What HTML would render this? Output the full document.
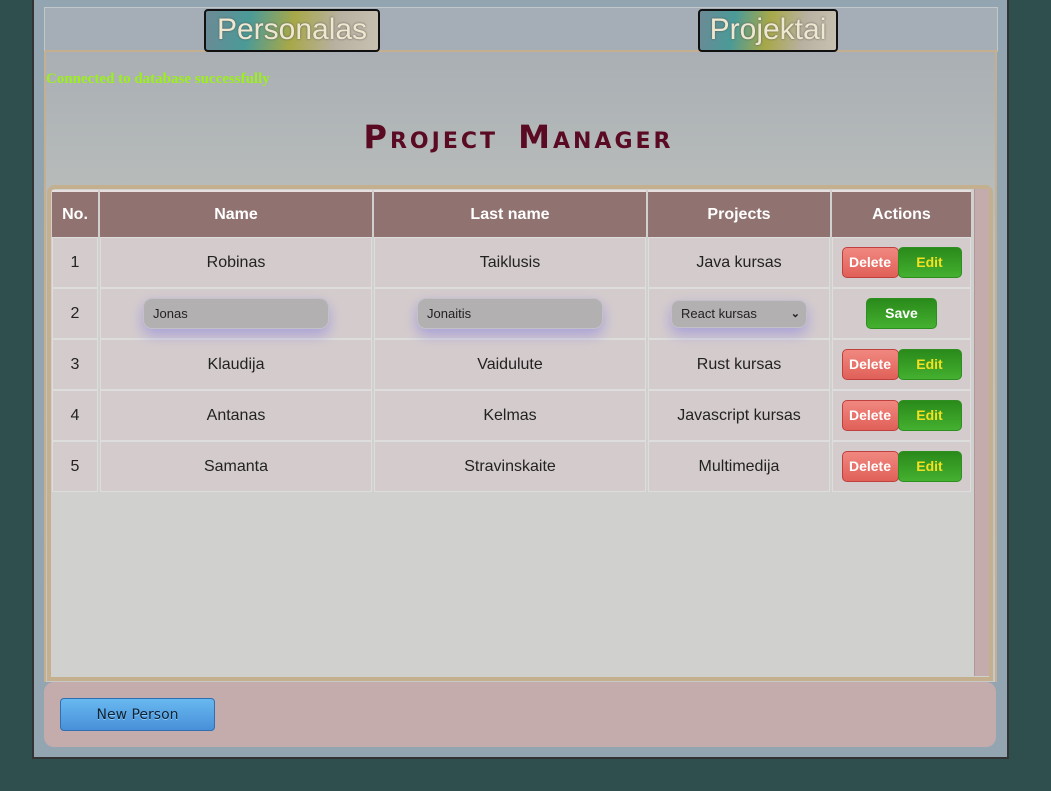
<!DOCTYPE html>
<html><head><style>
*{box-sizing:border-box;margin:0;padding:0}
body{width:1051px;height:791px;background:#2f4f4f;font-family:"Liberation Sans",sans-serif;position:relative;overflow:hidden}
.wrap{position:absolute;left:32px;top:-2px;width:977px;height:761px;background:#94a5b2;border:2px solid #333;}
.nav{position:absolute;left:44px;top:7px;width:954px;height:45px;background:#a5aeb6;border:1px solid #c0c8cc;border-bottom:2px solid #c4b090}
.nb{position:absolute;top:1px;height:43px;border:2px solid #111;border-radius:4px;color:#efe8d0;font-size:30px;line-height:38px;text-align:center;background:linear-gradient(100deg,#6d8a96 0%,#4a9a98 25%,#a7a848 50%,#b8b0a0 75%,#c8c0b0 100%);text-shadow:0 0 2px #555}
.main{position:absolute;left:44px;top:52px;width:953px;height:630px;background:linear-gradient(#a9afb4,#bdc0bc 30%,#c8c8c4);border-left:2px solid #c4b090;border-right:2px solid #c4b090}
.msg{position:absolute;left:46px;top:71px;color:#9cf01c;font-family:"Liberation Serif",serif;font-size:15px;font-weight:bold}
h1{position:absolute;left:0;width:1037px;top:118px;text-align:center;font-family:"DejaVu Sans",sans-serif;font-variant:small-caps;font-weight:bold;font-size:32px;letter-spacing:3px;color:#5a0a22;word-spacing:6px}
.frame{position:absolute;left:47px;top:185px;width:946px;height:496px;border:4px solid #c4b08e;border-radius:8px 8px 0 0;background:#d0d0ce}
.sb{position:absolute;left:974px;top:189px;width:15px;height:487px;background:#c4acac;border-left:1px solid #b09898}
table{position:absolute;left:52px;top:190px;border-collapse:separate;border-spacing:2px 0;margin-left:-2px}
td,th{text-align:center;font-size:16px;color:#222}
th{background:#907370;color:#fff;font-size:16px;height:47px;border-top:2px solid #e8e0e0}
td{height:51px;background:#d4cccc;border:1px solid #ddd}
.del,.edit,.save{display:inline-block;height:31px;line-height:29px;font-weight:bold;font-size:14px;border-radius:5px;vertical-align:middle}
.del{width:57px;background:linear-gradient(#f08880,#e06058);border:1px solid #c04040;color:#fff}
.edit{width:64px;background:linear-gradient(#2a8a1a,#44b030);border:1px solid #2c8f20;color:#f4e020;margin-left:-1px}
.save{width:71px;background:linear-gradient(#2a8a1a,#44b030);border:1px solid #2c8f20;color:#fff}
.inp{display:inline-block;width:186px;height:31px;border-radius:9px;background:#b2b0b0;border:1px solid #c4c0c8;text-align:left;padding-left:9px;line-height:29px;font-size:13px;box-shadow:0 6px 14px #a8a0d8}
.sel{display:inline-block;width:136px;height:28px;border-radius:8px;background:#b2b0b0;border:1px solid #c4c0c8;text-align:left;padding-left:9px;line-height:26px;font-size:13px;box-shadow:0 6px 14px #a8a0d8;position:relative}
.bot{position:absolute;left:44px;top:682px;width:952px;height:65px;background:#c4acac;border-radius:10px}
.np{position:absolute;left:60px;top:698px;width:155px;height:33px;border-radius:4px;border:1px solid #3070b0;background:linear-gradient(#68b8f0,#4890d8);color:#123;font-family:"DejaVu Sans",sans-serif;font-size:14px;text-align:center;line-height:33px;text-shadow:0 1px 0 #8cf}
</style></head><body>
<div class="wrap"></div>
<div class="nav">
<div class="nb" style="left:159px;width:176px">Personalas</div>
<div class="nb" style="left:653px;width:140px">Projektai</div>
</div>
<div class="main"></div>
<div class="msg">Connected to database successfully</div>
<h1>Project Manager</h1>
<div class="frame"></div>
<div class="sb"></div>
<table>
<tr><th style="width:46px">No.</th><th style="width:272px">Name</th><th style="width:272px">Last name</th><th style="width:182px">Projects</th><th style="width:139px">Actions</th></tr>
<tr><td>1</td><td>Robinas</td><td>Taiklusis</td><td>Java kursas</td><td><span class="del">Delete</span><span class="edit">Edit</span></td></tr>
<tr><td>2</td><td><span class="inp">Jonas</span></td><td><span class="inp">Jonaitis</span></td><td><span class="sel">React kursas<span style="position:absolute;right:6px;font-size:11px;font-weight:bold">&#8964;</span></span></td><td><span class="save">Save</span></td></tr>
<tr><td>3</td><td>Klaudija</td><td>Vaidulute</td><td>Rust kursas</td><td><span class="del">Delete</span><span class="edit">Edit</span></td></tr>
<tr><td>4</td><td>Antanas</td><td>Kelmas</td><td>Javascript kursas</td><td><span class="del">Delete</span><span class="edit">Edit</span></td></tr>
<tr><td>5</td><td>Samanta</td><td>Stravinskaite</td><td>Multimedija</td><td><span class="del">Delete</span><span class="edit">Edit</span></td></tr>
</table>
<div class="bot"></div>
<div class="np">New Person</div>
</body></html>
